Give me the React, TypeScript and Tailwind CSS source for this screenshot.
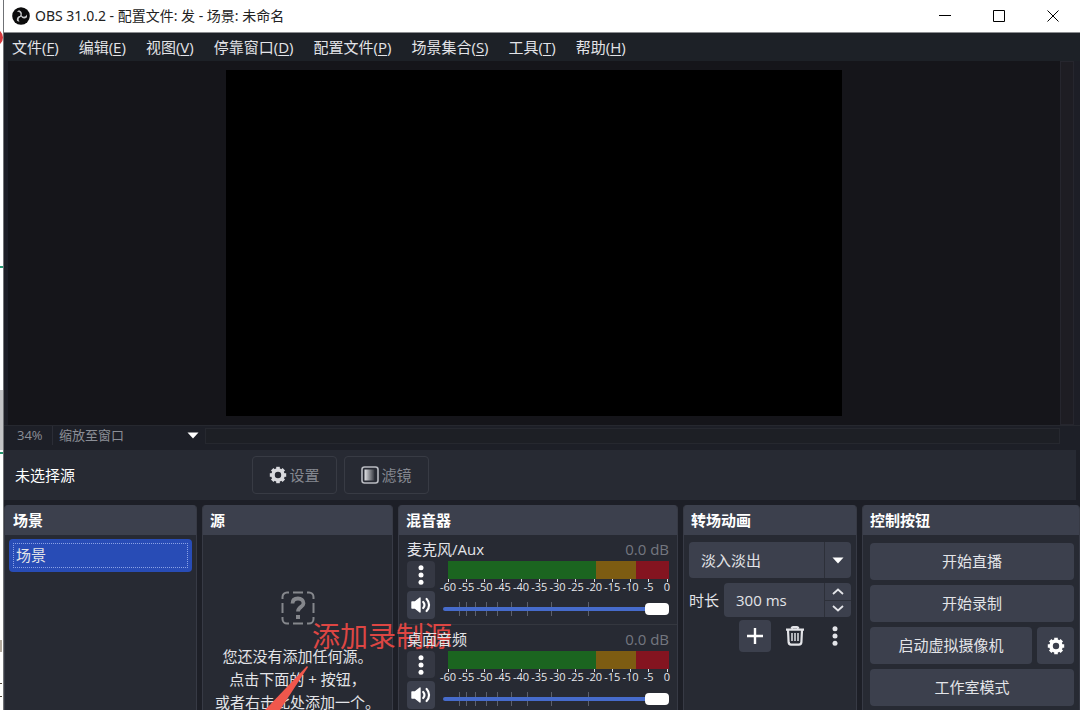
import type { ReactNode } from 'react'

const menus = [
  ['文件', 'F'],
  ['编辑', 'E'],
  ['视图', 'V'],
  ['停靠窗口', 'D'],
  ['配置文件', 'P'],
  ['场景集合', 'S'],
  ['工具', 'T'],
  ['帮助', 'H'],
]

const dbMarks = [-60, -55, -50, -45, -40, -35, -30, -25, -20, -15, -10, -5, 0]
// fader ticks, in percent of the track
const faderMarks = [7, 10, 14, 19, 24, 30, 37, 48, 64]

function ObsLogo() {
  return (
    <svg width="18" height="18" viewBox="0 0 18 18" aria-hidden="true">
      <circle cx="9" cy="9" r="8.800" fill="#0b0b0c" />
      {[0, 120, 240].map((a) => (
        <path
          key={a}
          d="M9.300 8.600C10.600 6.800 10 4.200 7 3.200 5.900 3.700 5.300 4.300 4.900 5 7.200 4.400 8.900 6 8.500 8.400z"
          fill="#c9cacc"
          transform={`rotate(${a} 9 9)`}
        />
      ))}
      <circle cx="9" cy="9" r="1" fill="#c9cacc" />
    </svg>
  )
}

function GearIcon() {
  return (
    <svg width="18" height="18" viewBox="0 0 18 18" fill="none" stroke="currentColor" aria-hidden="true">
      <circle cx="9" cy="9" r="5" strokeWidth="3.6" />
      {[0, 45, 90, 135, 180, 225, 270, 315].map((a) => (
        <path key={a} d="M9 3.2V.8" strokeWidth="3.6" transform={`rotate(${a} 9 9)`} />
      ))}
    </svg>
  )
}

function FilterIcon() {
  return (
    <svg width="18" height="18" viewBox="0 0 18 18" aria-hidden="true">
      <defs>
        <linearGradient id="fade">
          <stop offset="0" stopColor="#e4e5e8" />
          <stop offset="1" stopColor="#34373f" />
        </linearGradient>
      </defs>
      <rect x="1" y="1" width="16" height="16" rx="2.5" fill="none" stroke="#b9bbc1" strokeWidth="1.6" />
      <rect x="3.5" y="3.5" width="10" height="11" fill="url(#fade)" />
    </svg>
  )
}

function DotsIcon() {
  return (
    <svg width="20" height="22" viewBox="0 0 20 22" fill="currentColor" aria-hidden="true">
      <circle cx="10" cy="3.8" r="2.5" />
      <circle cx="10" cy="11" r="2.5" />
      <circle cx="10" cy="18.2" r="2.5" />
    </svg>
  )
}

function SpeakerIcon() {
  return (
    <svg width="20" height="18" viewBox="0 0 20 18" fill="none" stroke="currentColor" strokeWidth="2.2" strokeLinecap="round" aria-hidden="true">
      <path d="M1 6h3l5-4v14l-5-4H1z" fill="currentColor" strokeLinejoin="round" strokeWidth="1.4" />
      <path d="M12.2 6a4.2 4.2 0 0 1 0 6M15.6 3a8.6 8.6 0 0 1 0 12" />
    </svg>
  )
}

function TrashIcon() {
  return (
    <svg width="20" height="20" viewBox="0 0 20 20" fill="none" stroke="currentColor" strokeWidth="2.2" aria-hidden="true">
      <path d="M1 3.6h18M6.5 2.4Q7 1.2 8 1.2h4q1 0 1.5 1.2" />
      <path d="M3 4l.6 12.2Q4 18.600 6 18.600h8q2 0 2.400-2.400L17 4" />
      <path d="M7 7v8M10 7v8M13 7v8" strokeWidth="1.5" />
    </svg>
  )
}

function Caret() {
  return (
    <svg width="12" height="7" viewBox="0 0 12 7" fill="currentColor" aria-hidden="true">
      <path d="M.5.5h11L6 6.5z" />
    </svg>
  )
}

function Dock({ title, inset, children }: { title: string; inset: string; children: ReactNode }) {
  return (
    <section className="flex min-w-0 flex-col overflow-hidden rounded-t border-x border-[#373a45] bg-[#272a33]">
      <h2 className={`flex h-[30px] shrink-0 items-center bg-[#3c404d] text-[15px] font-bold text-white ${inset}`}>{title}</h2>
      {children}
    </section>
  )
}

function Channel({ name }: { name: string }) {
  return (
    <div className="h-[90px] shrink-0 border-b border-[#34373f] px-2 pt-1">
      <div className="relative z-20 flex h-[20px] items-center justify-between text-[15px] leading-[18px]">
        <span>{name}</span>
        <span className="text-[#747780]">0.0 dB</span>
      </div>
      <div className="mt-[2px] flex gap-2">
        <div className="flex w-[28px] shrink-0 flex-col gap-[3px]">
          <button aria-label={`${name} 选项`} className="flex h-[27px] items-center justify-center rounded bg-[#353843] text-white">
            <DotsIcon />
          </button>
          <button aria-label={`${name} 静音`} className="flex h-[28px] items-center justify-center rounded bg-[#3c404d] text-white">
            <SpeakerIcon />
          </button>
        </div>
        <div className="flex min-w-0 flex-1 flex-col">
          <div className="ml-[5px] flex h-[18px]">
            <div className="w-[67%] bg-[#1b6520]" />
            <div className="w-[18%] bg-[#7d5c12]" />
            <div className="flex-1 bg-[#841420]" />
          </div>
          <div className="mr-[2px] ml-[5px] flex justify-between text-[11px] leading-[9px] text-[#e6e7ea]">
            {dbMarks.map((m) => (
              <div key={m} className="flex w-0 flex-col items-center">
                <i className="h-[3px] w-px bg-[#dcdde0]" />
                <span>{m}</span>
              </div>
            ))}
          </div>
          <div className="relative mt-[9px] flex h-[18px] items-center">
            {faderMarks.map((m) => (
              <i key={m} className="absolute top-[2px] h-[14px] w-px bg-[#5b5f6b]" style={{ left: `${m}%` }} />
            ))}
            <input
              type="range"
              aria-label={`${name} 音量`}
              defaultValue={100}
              className="relative h-1 w-full appearance-none rounded bg-[#466bcb] [&::-webkit-slider-thumb]:h-3 [&::-webkit-slider-thumb]:w-6 [&::-webkit-slider-thumb]:appearance-none [&::-webkit-slider-thumb]:rounded [&::-webkit-slider-thumb]:bg-white"
            />
          </div>
        </div>
      </div>
    </div>
  )
}

function ControlButton({ children }: { children: ReactNode }) {
  return <button className="h-[37px] w-full rounded bg-[#3c404d] text-[15px]">{children}</button>
}

// sliver of the window behind this one
function BackWindowEdge() {
  return (
    <div className="relative w-1 shrink-0 overflow-hidden border-r border-[#6f7175] bg-white">
      <i className="absolute top-[29px] -left-[14px] h-[17px] w-[17px] rounded-full border-3 border-[#d83a3e]" />
      <i className="absolute top-[266px] left-0 h-[2px] w-full bg-[#25956f]" />
      <i className="absolute top-[390px] left-0 h-[60px] w-full bg-[#c3c4c6]" />
      <i className="absolute top-[452px] left-0 h-[2px] w-full bg-[#25956f]" />
      <i className="absolute top-[640px] left-0 h-3 w-[2px] bg-[#b4ab9f]" />
      <i className="absolute top-[683px] left-0 h-[14px] w-[2px] border-y border-[#4c4238]" />
    </div>
  )
}

export default function App() {
  return (
    <div className="relative flex h-screen overflow-hidden bg-[#1d1f27] font-['Open_Sans','Noto_Sans_CJK_SC',sans-serif] text-[#e3e4e8]">
      <BackWindowEdge />
      <div className="flex min-w-0 flex-1 flex-col">
        <header className="flex h-[33px] shrink-0 items-center border-b border-[#8b8d90] bg-white pr-[-2px] pl-2 text-black">
          <ObsLogo />
          <h1 className="flex-1 pl-[5px] font-['Noto_Sans','Noto_Sans_CJK_SC',sans-serif] text-[14px] leading-[18px] text-[#222]">OBS 31.0.2 - 配置文件: 发 - 场景: 未命名</h1>
          <button aria-label="最小化" className="flex h-full w-[54px] items-center justify-center">
            <svg width="12" height="12" viewBox="0 0 12 12" stroke="currentColor"><path d="M0 5.5h12" /></svg>
          </button>
          <button aria-label="最大化" className="flex h-full w-[54px] items-center justify-center">
            <svg width="12" height="12" viewBox="0 0 12 12" fill="none" stroke="currentColor"><path d="M.5.5h11v11H.5z" /></svg>
          </button>
          <button aria-label="关闭" className="flex h-full w-[54px] items-center justify-center">
            <svg width="12" height="12" viewBox="0 0 12 12" stroke="currentColor"><path d="M.5.5l11 11M11.5.5l-11 11" /></svg>
          </button>
        </header>

        <nav className="flex h-7 shrink-0 items-center gap-5 bg-[#1d2127] pl-2 text-[15px] leading-[18px]">
          {menus.map(([label, key]) => (
            <button key={key}>
              {label}(<u className="underline-offset-2">{key}</u>)
            </button>
          ))}
        </nav>

        <main className="flex shrink-0 bg-[#1d1e26] pr-[6px] pl-1">
          <div className="flex flex-1 justify-center bg-[#15151a] py-[9px]">
            <div className="aspect-video w-[58.5%] bg-black" />
          </div>
          <div className="w-[14px] border border-[#26262e] bg-[#1e1d23]" />
        </main>

        <div className="flex h-[20px] shrink-0 items-center border-t border-[#26282f] pr-5 pl-[13px] text-[13px] text-[#8b8e96]">
          <span className="w-[35px]">34%</span>
          <label className="relative flex w-[153px] items-center border-l border-[#2b2d36]">
            <select aria-label="预览缩放" className="w-full appearance-none bg-transparent pl-[6px]">
              <option>缩放至窗口</option>
            </select>
            <span className="pointer-events-none absolute right-[6px] text-white">
              <Caret />
            </span>
          </label>
          <div className="h-[16px] flex-1 border border-[#26282f] bg-[#1d1f25]" />
        </div>

        <div className="mt-[5px] mr-1 flex h-[50px] shrink-0 items-center gap-[7px] bg-[#272a33] pl-[11px] text-[15px]">
          <span className="w-[230px] text-white">未选择源</span>
          <button className="flex h-[38px] w-[85px] items-center justify-center gap-[2px] rounded border border-[#383b44] text-[#858890]">
            <span className="text-[#d9dade]"><GearIcon /></span>
            设置
          </button>
          <button className="flex h-[38px] w-[85px] items-center justify-center gap-[2px] rounded border border-[#383b44] text-[#858890]">
            <FilterIcon />
            滤镜
          </button>
        </div>

        <div className="mt-[5px] grid min-h-0 flex-1 grid-cols-[193fr_191fr_280fr_174fr_218fr] gap-[5px]">
          <Dock title="场景" inset="pl-2">
            <ul className="px-1 pt-1">
              <li className="rounded bg-[#284cb6] p-1">
                <button className="flex h-[25px] w-full items-center border border-dotted border-[#8ba2e6] pl-[2px] text-[15px]">场景</button>
              </li>
            </ul>
          </Dock>

          <Dock title="源" inset="pl-[7px]">
            <div className="flex flex-col items-center pt-[56px]">
              <svg width="34" height="34" viewBox="0 0 34 34" fill="none" stroke="#85878c" aria-hidden="true">
                <path d="M1.5 8V6A4.500 4.500 0 0 1 6 1.500H8M12 1.500h10M26 1.500h2A4.500 4.500 0 0 1 32.500 6v2M32.500 12v10M32.500 26v2a4.500 4.500 0 0 1-4.500 4.500h-2M22 32.500H12M8 32.500H6A4.500 4.500 0 0 1 1.500 28v-2M1.500 22V12" strokeWidth="2" />
                <path d="M11.500 12.500C11.500 9 14 7.500 17 7.500s5.500 1.700 5.500 4.700c0 3.800-5.500 3.600-5.500 8.300" strokeWidth="3.800" />
                <path d="M17 24v4" strokeWidth="4" />
              </svg>
              <p className="mt-5 text-center text-[15px] leading-[23px] whitespace-nowrap">
                您还没有添加任何源。
                <br />
                点击下面的 + 按钮，
                <br />
                或者右击此处添加一个。
              </p>
            </div>
          </Dock>

          <Dock title="混音器" inset="pl-[7px]">
            <Channel name="麦克风/Aux" />
            <Channel name="桌面音频" />
          </Dock>

          <Dock title="转场动画" inset="pl-[7px]">
            <div className="flex flex-col px-[5px] pt-[7px] text-[15px]">
              <label className="relative flex h-9 rounded bg-[#3c404d]">
                <select aria-label="转场类型" className="w-full appearance-none pl-3">
                  <option>淡入淡出</option>
                </select>
                <span className="pointer-events-none absolute inset-y-0 right-0 flex w-[27px] items-center justify-center border-l border-[#2d3039] text-white">
                  <Caret />
                </span>
              </label>
              <div className="mt-[5px] flex items-center justify-between">
                <label htmlFor="duration">时长</label>
                <div className="flex h-[34px] w-[127px] rounded bg-[#3c404d]">
                  <input id="duration" defaultValue="300 ms" className="w-[100px] bg-transparent pl-3" />
                  <div className="flex flex-1 flex-col border-l border-[#2d3039]">
                    <button aria-label="增加" className="flex flex-1 items-center justify-center border-b border-[#2d3039]">
                      <svg width="12" height="7" viewBox="0 0 12 7" fill="none" stroke="currentColor" strokeWidth="1.8"><path d="M1 6l5-4.500L11 6" /></svg>
                    </button>
                    <button aria-label="减少" className="flex flex-1 items-center justify-center">
                      <svg width="12" height="7" viewBox="0 0 12 7" fill="none" stroke="currentColor" strokeWidth="1.8"><path d="M1 1l5 4.500L11 1" /></svg>
                    </button>
                  </div>
                </div>
              </div>
              <div className="mt-[3px] flex justify-end gap-2">
                <button aria-label="添加转场" className="flex size-8 items-center justify-center rounded bg-[#3c404d] text-white">
                  <svg width="18" height="18" viewBox="0 0 18 18" stroke="currentColor" strokeWidth="2.400"><path d="M9 1v16M1 9h16" /></svg>
                </button>
                <button aria-label="删除转场" className="flex size-8 items-center justify-center">
                  <TrashIcon />
                </button>
                <button aria-label="转场属性" className="flex size-8 items-center justify-center">
                  <DotsIcon />
                </button>
              </div>
            </div>
          </Dock>

          <Dock title="控制按钮" inset="pl-[7px]">
            <div className="flex flex-col gap-[5px] pt-2 pr-[5px] pl-[7px]">
              <ControlButton>开始直播</ControlButton>
              <ControlButton>开始录制</ControlButton>
              <div className="flex gap-[5px]">
                <ControlButton>启动虚拟摄像机</ControlButton>
                <button aria-label="虚拟摄像机设置" className="flex h-[37px] w-[37px] shrink-0 items-center justify-center rounded bg-[#3c404d] text-white">
                  <GearIcon />
                </button>
              </div>
              <ControlButton>工作室模式</ControlButton>
            </div>
          </Dock>
        </div>
      </div>

      {/* hand-drawn note over the docks */}
      <p className="absolute top-[616px] left-[312px] z-10 text-[28px] leading-10 text-[#dd4643]">添加录制源</p>
      <svg className="absolute top-[666px] left-[262px]" width="48" height="44" viewBox="0 0 48 44" fill="#f0574c" aria-hidden="true">
        <path d="M45 0L3 44h15L46 1z" />
      </svg>
    </div>
  )
}
